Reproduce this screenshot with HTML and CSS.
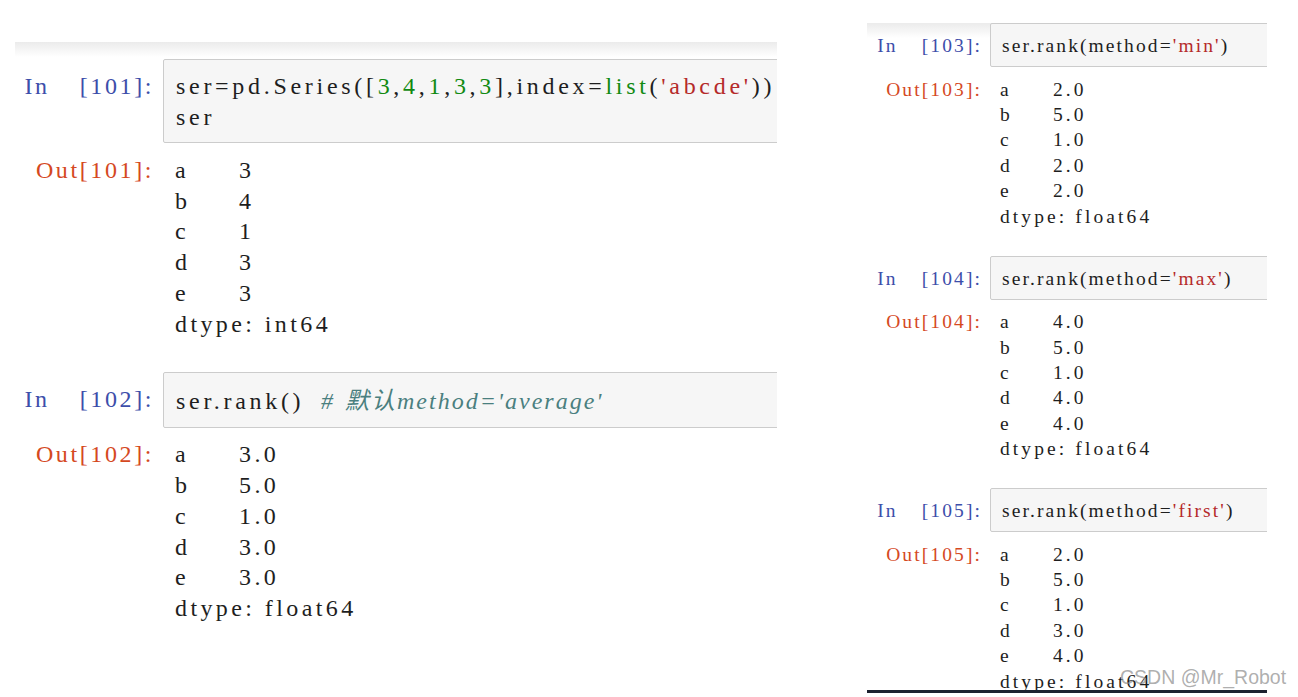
FILE: index.html
```html
<!DOCTYPE html>
<html lang="zh">
<head>
<meta charset="utf-8">
<title>pandas rank</title>
<link rel="stylesheet" href="styles.css">
</head>
<body>
<main class="page">
  <section class="nb nb-left">
    <div class="row in-row first">
      <div class="prompt p-in"><span class="pl">In</span>[101]:</div>
      <div class="input"><div class="line">ser=pd.Series([<span class="num">3</span>,<span class="num">4</span>,<span class="num">1</span>,<span class="num">3</span>,<span class="num">3</span>],index=<span class="bi">list</span>(<span class="str">'abcde'</span>))</div><div class="line">ser</div></div>
    </div>
    <div class="row out-row">
      <div class="prompt p-out">Out[101]:</div>
      <div class="series">
        <span>a</span><span>3</span>
        <span>b</span><span>4</span>
        <span>c</span><span>1</span>
        <span>d</span><span>3</span>
        <span>e</span><span>3</span>
        <span class="dtype">dtype: int64</span>
      </div>
    </div>
    <div class="row in-row">
      <div class="prompt p-in"><span class="pl">In</span>[102]:</div>
      <div class="input"><div class="line">ser.rank() <span class="cmt"># <span class="cjk">默认</span>method='average'</span></div></div>
    </div>
    <div class="row out-row">
      <div class="prompt p-out">Out[102]:</div>
      <div class="series">
        <span>a</span><span>3.0</span>
        <span>b</span><span>5.0</span>
        <span>c</span><span>1.0</span>
        <span>d</span><span>3.0</span>
        <span>e</span><span>3.0</span>
        <span class="dtype">dtype: float64</span>
      </div>
    </div>
  </section>

  <section class="nb nb-right">
    <div class="row in-row first">
      <div class="prompt p-in"><span class="pl">In</span>[103]:</div>
      <div class="input"><div class="line">ser.rank(method=<span class="str">'min'</span>)</div></div>
    </div>
    <div class="row out-row">
      <div class="prompt p-out">Out[103]:</div>
      <div class="series">
        <span>a</span><span>2.0</span>
        <span>b</span><span>5.0</span>
        <span>c</span><span>1.0</span>
        <span>d</span><span>2.0</span>
        <span>e</span><span>2.0</span>
        <span class="dtype">dtype: float64</span>
      </div>
    </div>
    <div class="row in-row">
      <div class="prompt p-in"><span class="pl">In</span>[104]:</div>
      <div class="input"><div class="line">ser.rank(method=<span class="str">'max'</span>)</div></div>
    </div>
    <div class="row out-row">
      <div class="prompt p-out">Out[104]:</div>
      <div class="series">
        <span>a</span><span>4.0</span>
        <span>b</span><span>5.0</span>
        <span>c</span><span>1.0</span>
        <span>d</span><span>4.0</span>
        <span>e</span><span>4.0</span>
        <span class="dtype">dtype: float64</span>
      </div>
    </div>
    <div class="row in-row">
      <div class="prompt p-in"><span class="pl">In</span>[105]:</div>
      <div class="input"><div class="line">ser.rank(method=<span class="str">'first'</span>)</div></div>
    </div>
    <div class="row out-row">
      <div class="prompt p-out">Out[105]:</div>
      <div class="series">
        <span>a</span><span>2.0</span>
        <span>b</span><span>5.0</span>
        <span>c</span><span>1.0</span>
        <span>d</span><span>3.0</span>
        <span>e</span><span>4.0</span>
        <span class="dtype">dtype: float64</span>
      </div>
    </div>
  </section>
  <div class="watermark">CSDN @Mr_Robot</div>
</main>
</body>
</html>
```

FILE: styles.css
```css
html, body {
  margin: 0;
  padding: 0;
  background: #ffffff;
}

.page {
  position: relative;
  display: flex;
  align-items: flex-start;
  width: 1298px;
  height: 697px;
  overflow: hidden;
}

.nb {
  font-family: "Liberation Serif", "Noto Sans CJK SC", serif;
  color: #1e1e1e;
  font-size: var(--fs);
  letter-spacing: var(--ls);
  line-height: var(--lh);
  overflow: hidden;
  box-sizing: border-box;
  background: linear-gradient(#ebebeb 0, #ffffff 15px) no-repeat;
}

.nb-left {
  --fs: 24px;
  --ls: 3.4px;
  --ls-in: 3.7px;
  --ls-cmt: 2px;
  --ls-p: 2.6px;
  --pl-gap: 30px;
  --lh: 30.8px;
  --pw: 139px;
  --gap: 9px;
  --pad-in: 12px;
  --pad-out: 12px;
  --pad-v: 10.3px;
  --g1: 11.6px;
  --g2: 32.6px;
  --idx: 64px;
  margin-left: 15px;
  margin-top: 42px;
  width: 762px;
  padding-top: 17px;
}

.nb-right {
  --fs: 19.5px;
  --ls: 3.1px;
  --ls-in: 2.1px;
  --ls-cmt: 2.1px;
  --ls-p: 2.1px;
  --pl-gap: 24px;
  --lh: 25.4px;
  --pw: 115px;
  --gap: 8px;
  --pad-in: 11px;
  --pad-out: 10px;
  --pad-v: 8.3px;
  --g1: 9.6px;
  --g2: 26.5px;
  --idx: 53px;
  margin-left: 90px;
  margin-top: 23px;
  width: 400px;
  height: 670px;
  border-bottom: 3px solid #1c2230;
}

.row {
  display: flex;
  align-items: flex-start;
}

.in-row {
  margin-top: var(--g2);
}

.in-row.first {
  margin-top: 0;
}

.out-row {
  margin-top: var(--g1);
}

.prompt {
  flex: 0 0 var(--pw);
  margin-right: var(--gap);
  text-align: right;
  white-space: nowrap;
  letter-spacing: var(--ls-p);
}

.pl {
  margin-right: var(--pl-gap);
}

.in-row .prompt {
  padding-top: calc(var(--pad-v) + 2px);
}

.p-in {
  color: #3d4eaa;
}

.p-out {
  color: #d5491f;
}

.input {
  flex: 1 0 auto;
  margin-right: -12px;
  background: #f6f6f6;
  border: 1px solid #cccccc;
  border-radius: 2px;
  padding: calc(var(--pad-v) + 1px) 0 calc(var(--pad-v) - 1px) var(--pad-in);
  white-space: pre;
  letter-spacing: var(--ls-in);
}

.line {
  display: block;
}

.series {
  flex: 1 0 auto;
  display: grid;
  grid-template-columns: var(--idx) auto;
  justify-content: start;
  padding-left: var(--pad-out);
  white-space: nowrap;
}

.dtype {
  grid-column: 1 / -1;
}

.num {
  color: #118a11;
}

.bi {
  color: #118a11;
}

.str {
  color: #b52a2a;
}

.cmt {
  color: #4a7f7f;
  font-style: italic;
  margin-left: 7px;
  letter-spacing: var(--ls-cmt);
}

.cjk {
  font-family: "Noto Sans CJK SC", sans-serif;
  font-style: italic;
  letter-spacing: 2px;
  margin-left: 2px;
}

.watermark {
  position: absolute;
  left: 1120px;
  top: 666px;
  font-family: "Liberation Sans", "Noto Sans", sans-serif;
  font-size: 19.5px;
  color: rgba(140, 140, 140, 0.7);
  white-space: nowrap;
}
```
